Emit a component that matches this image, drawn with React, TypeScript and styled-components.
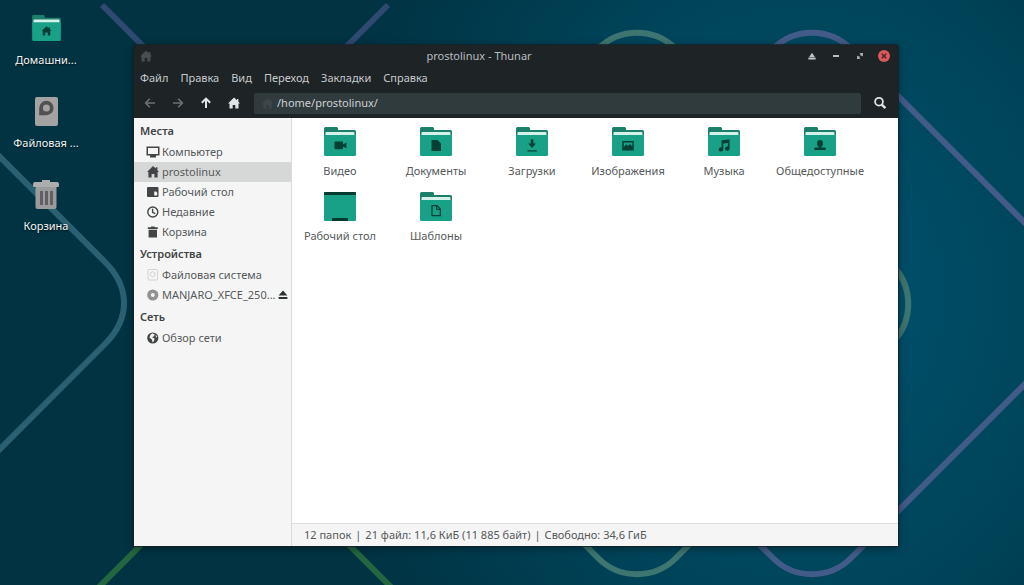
import React from 'react';
import styled, { createGlobalStyle } from 'styled-components';

const GlobalStyle = createGlobalStyle`
  *, *::before, *::after { box-sizing: border-box; }
  body {
    margin: 0;
    background: #013442;
    font-family: "Noto Sans", "Open Sans", sans-serif;
    font-size: 11px;
    line-height: 16px;
  }
  button, input { font: inherit; color: inherit; }
  button { border: 0; padding: 0; background: none; }
  ul { list-style: none; margin: 0; padding: 0; }
  svg { display: block; flex: none; }
`;

const Desktop = styled.div`
  position: relative;
  display: flex;
  min-height: 100vh;
  background: radial-gradient(ellipse 48% 98% at 78% 50%, #00506c 0%, #004e69 20%, #004459 55%, #00394b 82%, #013343 100%);
`;

const Wallpaper = styled.svg`
  position: absolute;
  inset: 0;
  width: 100%;
  height: 100%;
`;

const Shortcuts = styled.ul`
  position: relative;
  width: 92px;
  flex: none;
  display: flex;
  flex-direction: column;
  gap: 27px;
  padding-top: 12px;
`;

const Shortcut = styled.button`
  width: 100%;
  display: flex;
  flex-direction: column;
  align-items: center;
  gap: 8px;
  color: #f2f5f6;
  text-shadow: 0 1px 2px rgba(0, 0, 0, 0.8);
`;

const ShortcutIcon = styled.span`
  height: 32px;
  display: flex;
  align-items: center;
`;

const Window = styled.main`
  position: relative;
  flex: 1;
  min-width: 0;
  display: flex;
  flex-direction: column;
  margin: 45px 126px 39px 42px;
  border-radius: 3px 3px 0 0;
  background: #1e2326;
  box-shadow: 0 0 0 1px rgba(20, 32, 38, 0.75), 0 2px 8px rgba(0, 0, 0, 0.45);
`;

const TitleBar = styled.header`
  height: 22px;
  display: flex;
  align-items: center;
  padding-right: 2px;
  color: #b9bdc0;
`;

const Title = styled.h1`
  flex: 1;
  margin: 0;
  font-size: 11px;
  font-weight: 400;
  text-align: center;
`;

const TitleSlot = styled.button`
  width: 24px;
  height: 22px;
  display: flex;
  align-items: center;
  justify-content: center;
`;

const MenuBar = styled.nav`
  height: 22px;
  display: flex;
  align-items: center;
  gap: 12px;
  padding: 0 6px;
  color: #c6cacc;
`;

const ToolBar = styled.div`
  height: 29px;
  display: flex;
  align-items: center;
  padding: 0 4px 1px 2px;
`;

const ToolButton = styled.button<{ $muted?: boolean }>`
  width: 28px;
  height: 24px;
  display: flex;
  align-items: center;
  justify-content: center;
  color: ${(p) => (p.$muted ? '#6c7173' : '#e1e4e5')};
`;

const PathField = styled.label`
  flex: 1;
  height: 21px;
  display: flex;
  align-items: center;
  gap: 4px;
  margin: 0 5px 0 6px;
  padding-left: 8px;
  border-radius: 2px;
  background: #303b3d;
  color: #3f4648;
`;

const PathInput = styled.input`
  flex: 1;
  min-width: 0;
  border: 0;
  padding: 0;
  outline: 0;
  background: none;
  color: #cdd2d3;
`;

const Body = styled.div`
  flex: 1;
  display: flex;
  background: #fff;
`;

const Sidebar = styled.aside`
  width: 158px;
  flex: none;
  padding-top: 1px;
  background: #f5f5f5;
  border-right: 1px solid #dcdcdc;
  color: #565a5b;
`;

const SectionTitle = styled.h2`
  margin: 0;
  padding-left: 6px;
  font-size: 11px;
  font-weight: 600;
  line-height: 23px;
  color: #3f4344;
`;

const PlaceRow = styled.li<{ $active?: boolean }>`
  height: 20px;
  display: flex;
  align-items: center;
  padding: 0 2px 0 12px;
  background: ${(p) => (p.$active ? '#d6d7d7' : 'transparent')};
`;

const PlaceButton = styled.button`
  flex: 1;
  min-width: 0;
  display: flex;
  align-items: center;
  gap: 2px;
  text-align: left;
`;

const PlaceIcon = styled.span`
  width: 14px;
  height: 14px;
  flex: none;
  color: #414546;
`;

const PlaceName = styled.span`
  white-space: nowrap;
`;

const EjectButton = styled.button`
  width: 12px;
  height: 14px;
  flex: none;
  color: #2c3233;
`;

const Content = styled.section`
  flex: 1;
  min-width: 0;
  display: flex;
  flex-direction: column;
`;

const FileGrid = styled.ul`
  flex: 1;
  display: grid;
  grid-template-columns: repeat(auto-fill, 96px);
  grid-auto-rows: 65px;
  align-content: start;
  padding-top: 9px;
`;

const FileButton = styled.button`
  width: 100%;
  display: flex;
  flex-direction: column;
  align-items: center;
  gap: 7px;
  color: #55595a;
  white-space: nowrap;
`;

const StatusBar = styled.footer`
  height: 23px;
  display: flex;
  align-items: center;
  gap: 4px;
  padding-left: 12px;
  border-top: 1px solid #dedede;
  background: #f5f5f5;
  color: #54585a;
`;

const HomeIcon = ({ size = 12, color = 'currentColor' }: { size?: number; color?: string }) => (
  <svg width={size} height={size} viewBox="0 0 12 12" fill={color}>
    <path d="M6 .5 L9 3.3 V2 H10.4 V4.7 L12 6.4 H10.5 V11.5 H7.3 V8 H4.7 V11.5 H1.5 V6.4 H0 Z" />
  </svg>
);

const Arrow = ({ turn }: { turn: number }) => (
  <svg width="12" height="12" viewBox="0 0 12 12" fill="none" stroke="currentColor" strokeWidth={turn === 90 ? 2 : 1.6}>
    <path transform={`rotate(${turn} 6 6)`} d="M11 6 H1.8 M5.8 1.8 L1.6 6 L5.8 10.2" />
  </svg>
);

const SearchIcon = () => (
  <svg width="14" height="14" viewBox="0 0 14 14" fill="none" stroke="currentColor">
    <circle cx="6" cy="5.7" r="3.9" strokeWidth="1.8" />
    <path d="M8.8 8.6 L12.4 12.2" strokeWidth="2.4" />
  </svg>
);

const EjectIcon = () => (
  <svg width="12" height="14" viewBox="0 0 12 14" fill="currentColor">
    <path d="M6 2.6 L10.4 7.6 H1.6 Z M1.6 9 H10.4 V11 H1.6 Z" />
  </svg>
);

const glyphs: Record<string, React.ReactNode> = {
  video: <path d="M11.4 14.5 H18 Q19 14.5 19 15.5 V17.6 L22.4 15.6 V21.2 L19 19.4 V21.2 Q19 22.2 18 22.2 H11.4 Q10.4 22.2 10.4 21.2 V15.5 Q10.4 14.5 11.4 14.5 Z" />,
  document: <path d="M11.5 13 H17.5 L21 16.5 V24 H11.5 Z" />,
  download: <path d="M14.8 12.2 H17.4 V16.5 H20 L16.1 21 L12.2 16.5 H14.8 Z M11.5 23.2 H20.8 V24.4 H11.5 Z" />,
  image: (
    <path fillRule="evenodd" d="M10.2 14 H21.8 V23.4 H10.2 Z M11.8 15.5 V20 L14.3 17.3 L16 18.9 L18 17 L20.3 19.6 V15.5 Z" />
  ),
  music: (
    <path d="M13.6 13.2 L21.6 12.6 V21.5 A2.3 2.1 0 1 1 19.9 19.6 V16 L15.3 16.4 V22.4 A2.3 2.1 0 1 1 13.6 20.4 Z" />
  ),
  public: (
    <>
      <circle cx="16" cy="15.8" r="2.9" />
      <path d="M12.6 17.6 H19.4 L16.8 20.6 H20.6 Q21.8 20.6 21.8 21.8 V23 H10.2 V21.8 Q10.2 20.6 11.4 20.6 H15.2 Z" />
    </>
  ),
  template: (
    <path fill="none" stroke="#063f36" strokeWidth="1.2" d="M12 13.7 H17 L20.3 17 V23.7 H12 Z M16.6 13.7 V17.4 H20.3" />
  ),
  home: <path d="M16 12.6 L18.4 14.8 V13.8 H19.8 V16 L21.4 17.8 H20.2 V22.8 H17.4 V19.6 H14.6 V22.8 H11.8 V17.8 H10.6 Z" />,
};

const FolderIcon = ({ kind, width = 32, height = 29 }: { kind: string; width?: number; height?: number }) =>
  kind === 'desktop' ? (
    <svg width={width} height={height} viewBox="0 0 32 29">
      <rect width="32" height="29" rx="1" fill="#18a186" />
      <path d="M0 3 V1 Q0 0 1 0 H31 Q32 0 32 1 V3 Z M8 29 V27 Q8 26 9 26 H23 Q24 26 24 27 V29 Z" fill="#06392f" />
    </svg>
  ) : (
    <svg width={width} height={height} viewBox="0 0 32 29">
      <path d="M0 1.5 Q0 0 1.5 0 H12.5 Q14 0 14 1.5 V3 H30.5 Q32 3 32 4.5 V12 H0 Z" fill="#1b7f69" />
      <rect x="1.5" y="5" width="29" height="6" rx="1" fill="#d4f2e9" />
      <path d="M0 8 H32 V27.5 Q32 29 30.5 29 H1.5 Q0 29 0 27.5 Z" fill="#18a186" />
      <g fill="#063f36">{glyphs[kind]}</g>
    </svg>
  );

const DriveIcon = () => (
  <svg width="24" height="30" viewBox="0 0 24 30">
    <rect x="1" y="1" width="23" height="29" rx="2" fill="#a3a3a3" />
    <path d="M5.2 19 V12 A7.2 7.2 0 1 1 12.4 19.2 H5.2 Z" fill="#515151" />
    <circle cx="12.4" cy="12" r="3.5" fill="#a3a3a3" />
  </svg>
);

const BinIcon = () => (
  <svg width="28" height="30" viewBox="0 0 28 30">
    <path d="M3.5 7 H24.5 V28 Q24.5 30 22.5 30 H5.5 Q3.5 30 3.5 28 Z" fill="#9b9b9b" />
    <path d="M10 1 H18 V3 H25 Q27 3 27 5 V7 Q27 8 26 8 H2 Q1 8 1 7 V5 Q1 3 3 3 H10 Z" fill="#adadad" />
    <path d="M8 12 H11 V26 H8 Z M13 12 H16 V26 H13 Z M18 12 H21 V26 H18 Z" fill="#606060" />
  </svg>
);

const placeGlyphs: Record<string, React.ReactNode> = {
  computer: <path fillRule="evenodd" d="M.5 1.4 H13.5 V10.6 H10 V12.4 H4 V10.6 H.5 Z M2 2.9 V9.1 H12 V2.9 Z" />,
  home: <path d="M7 1 L9.8 3.6 V2.2 H11.4 V5.2 L13 7 H11.6 V12.4 H8.4 V9 H5.6 V12.4 H2.4 V7 H1 Z" />,
  desktop: (
    <>
      <rect x="1" y="2" width="11.5" height="10" rx="1" />
      <path d="M8.2 6.5 H10 L11.2 7.8 V10.4 H8.2 Z" fill="#f5f5f5" />
    </>
  ),
  recent: (
    <g fill="none" stroke="currentColor" strokeWidth="1.4">
      <circle cx="6.8" cy="7" r="5" />
      <path d="M6.6 3.8 V7.3 L9.3 8.6" />
    </g>
  ),
  trash: <path d="M5 1.4 H8.6 V2.2 H11.8 V4 H1.8 V2.2 H5 Z M2.6 4.8 H11 V12.6 H2.6 Z" />,
  drive: (
    <g fill="none" stroke="#d2d2d2">
      <rect x="2" y="1.5" width="9.5" height="10.5" rx="1" />
      <circle cx="6.7" cy="6.2" r="2.4" />
    </g>
  ),
  disc: (
    <>
      <circle cx="6.8" cy="7" r="5.6" fill="#929292" />
      <circle cx="6.8" cy="7" r="2" fill="#f2f2f2" />
    </>
  ),
  network: (
    <>
      <circle cx="6.8" cy="7" r="5.6" />
      <path d="M6.6 2.3 L8.6 3.4 L8 5.2 L6 6.2 L8.6 7.6 L8 10 L6.6 11.4 L5.8 8.6 L3.4 6.6 L4.6 3.4 Z M9.6 3.6 L11.4 6 L10 6.6 Z" fill="#f0f0f0" />
    </>
  ),
};

const sections = [
  {
    title: 'Места',
    places: [
      { name: 'Компьютер', icon: 'computer' },
      { name: 'prostolinux', icon: 'home', active: true },
      { name: 'Рабочий стол', icon: 'desktop' },
      { name: 'Недавние', icon: 'recent' },
      { name: 'Корзина', icon: 'trash' },
    ],
  },
  {
    title: 'Устройства',
    places: [
      { name: 'Файловая система', icon: 'drive' },
      { name: 'MANJARO_XFCE_250...', icon: 'disc', ejectable: true },
    ],
  },
  { title: 'Сеть', places: [{ name: 'Обзор сети', icon: 'network' }] },
] as { title: string; places: { name: string; icon: string; active?: boolean; ejectable?: boolean }[] }[];

const files = [
  ['Видео', 'video'],
  ['Документы', 'document'],
  ['Загрузки', 'download'],
  ['Изображения', 'image'],
  ['Музыка', 'music'],
  ['Общедоступные', 'public'],
  ['Рабочий стол', 'desktop'],
  ['Шаблоны', 'template'],
];

const shortcuts: [string, React.ReactNode][] = [
  ['Домашни...', <FolderIcon kind="home" width={29} height={26} />],
  ['Файловая ...', <DriveIcon />],
  ['Корзина', <BinIcon />],
];

const menus = ['Файл', 'Правка', 'Вид', 'Переход', 'Закладки', 'Справка'];

export default function App() {
  return (
    <>
      <GlobalStyle />
      <Desktop>
        <Wallpaper viewBox="0 0 1024 585" preserveAspectRatio="xMidYMid slice" fill="none" strokeWidth="6" aria-hidden="true">
          <path stroke="#2b6072" d="M-4 153 L105 262 Q124 281 124 303 Q124 325 105 344 L-4 453" />
          <g stroke="#2f4a70">
            <path d="M102 5 L150 53" />
            <path d="M388 5 L340 53" />
          </g>
          <g stroke="#435b88">
            <path d="M763 59 L773 49 A55 55 0 0 1 851 49 L1028 226" />
            <path d="M753 538 L773 558 A55 55 0 0 0 851 558 L1028 381" />
          </g>
          <g stroke="#3d7570">
            <path d="M588 59 L598 49 A55 55 0 0 1 676 49 L686 59" />
            <path d="M578 538 L598 558 A55 55 0 0 0 676 558 L696 538" />
            <path d="M882 254 L892 265 A55 55 0 0 1 892 343 L882 354" />
          </g>
          <g stroke="#23663f">
            <path d="M146 540 L98 588" />
            <path d="M344 540 L392 588" />
          </g>
        </Wallpaper>

        <Shortcuts>
          {shortcuts.map(([name, icon]) => (
            <li key={name}>
              <Shortcut>
                <ShortcutIcon>{icon}</ShortcutIcon>
                {name}
              </Shortcut>
            </li>
          ))}
        </Shortcuts>

        <Window>
          <TitleBar>
            <TitleSlot aria-label="Меню окна">
              <HomeIcon color="#4a4e50" />
            </TitleSlot>
            <Title>prostolinux - Thunar</Title>
            <TitleSlot aria-label="Скрутить">
              <svg width="8" height="8" viewBox="0 0 8 8" fill="#c3c7c9">
                <path d="M4 .8 L6.8 5 H1.2 Z M.4 5.4 H7.6 V7.6 H.4 Z" />
              </svg>
            </TitleSlot>
            <TitleSlot aria-label="Свернуть">
              <svg width="6" height="2" viewBox="0 0 6 2" fill="#b9bdc0">
                <path d="M0 0 H6 V2 H0 Z" />
              </svg>
            </TitleSlot>
            <TitleSlot aria-label="Развернуть">
              <svg width="6" height="6" viewBox="0 0 6 6" fill="#a9adb0">
                <path d="M2.4 0 H6 V3.6 L4.8 2.4 L4 3 L3 2 L3.6 1.2 Z M0 2.6 L1.2 3.6 L2 3 L3 4 L2.4 4.8 L3.4 6 H0 Z" />
              </svg>
            </TitleSlot>
            <TitleSlot aria-label="Закрыть">
              <svg width="12" height="12" viewBox="0 0 12 12">
                <circle cx="6" cy="6" r="6" fill="#d9595c" />
                <path d="M3.8 3.8 L8.2 8.2 M8.2 3.8 L3.8 8.2" stroke="#4a2529" strokeWidth="1.5" />
              </svg>
            </TitleSlot>
          </TitleBar>

          <MenuBar>
            {menus.map((name) => (
              <button key={name}>{name}</button>
            ))}
          </MenuBar>

          <ToolBar>
            <ToolButton $muted aria-label="Назад"><Arrow turn={0} /></ToolButton>
            <ToolButton $muted aria-label="Вперёд"><Arrow turn={180} /></ToolButton>
            <ToolButton aria-label="Вверх"><Arrow turn={90} /></ToolButton>
            <ToolButton aria-label="Домой"><HomeIcon /></ToolButton>
            <PathField>
              <HomeIcon size={11} />
              <PathInput aria-label="Путь" defaultValue="/home/prostolinux/" />
            </PathField>
            <ToolButton aria-label="Поиск"><SearchIcon /></ToolButton>
          </ToolBar>

          <Body>
            <Sidebar>
              {sections.map((section) => (
                <section key={section.title}>
                  <SectionTitle>{section.title}</SectionTitle>
                  <ul>
                    {section.places.map((place) => (
                      <PlaceRow key={place.name} $active={place.active}>
                        <PlaceButton>
                          <PlaceIcon>
                            <svg width="14" height="14" viewBox="0 0 14 14" fill="currentColor">
                              {placeGlyphs[place.icon]}
                            </svg>
                          </PlaceIcon>
                          <PlaceName>{place.name}</PlaceName>
                        </PlaceButton>
                        {place.ejectable && (
                          <EjectButton aria-label="Извлечь"><EjectIcon /></EjectButton>
                        )}
                      </PlaceRow>
                    ))}
                  </ul>
                </section>
              ))}
            </Sidebar>
            <Content>
              <FileGrid>
                {files.map(([name, kind]) => (
                  <li key={name}>
                    <FileButton>
                      <FolderIcon kind={kind} />
                      {name}
                    </FileButton>
                  </li>
                ))}
              </FileGrid>
              <StatusBar>
                <span>12 папок</span>
                <span>|</span>
                <span>21 файл: 11,6 КиБ (11 885 байт)</span>
                <span>|</span>
                <span>Свободно: 34,6 ГиБ</span>
              </StatusBar>
            </Content>
          </Body>
        </Window>
      </Desktop>
    </>
  );
}
